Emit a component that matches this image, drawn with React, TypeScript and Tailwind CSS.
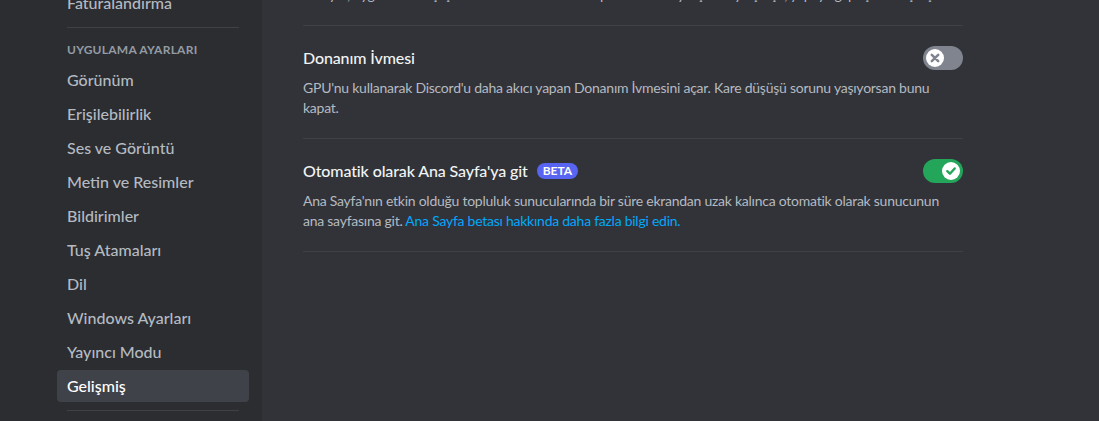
import React from "react";

const font = { fontFamily: 'Lato, "Noto Sans", sans-serif' };

function Toggle({ on }: { on: boolean }) {
  return (
    <div
      className={`relative w-[40px] h-[24px] rounded-full shrink-0 ${on ? "bg-[#23a55a]" : "bg-[#80848e]"}`}
    >
      <div
        className={`absolute top-[3px] w-[18px] h-[18px] rounded-full bg-white flex items-center justify-center ${on ? "left-[19px]" : "left-[3px]"}`}
      >
        {on ? (
          <svg width="12" height="12" viewBox="0 0 12 12">
            <path d="M2.3 6.2 L4.9 8.7 L9.7 3.5" stroke="#23a55a" strokeWidth="2.4" fill="none" strokeLinecap="round" strokeLinejoin="round" />
          </svg>
        ) : (
          <svg width="10" height="10" viewBox="0 0 10 10">
            <path d="M1.8 1.8 L8.2 8.2 M8.2 1.8 L1.8 8.2" stroke="#80848e" strokeWidth="2.5" strokeLinecap="round" />
          </svg>
        )}
      </div>
    </div>
  );
}

const items = [
  "Görünüm",
  "Erişilebilirlik",
  "Ses ve Görüntü",
  "Metin ve Resimler",
  "Bildirimler",
  "Tuş Atamaları",
  "Dil",
  "Windows Ayarları",
  "Yayıncı Modu",
];

function NavItem({ label, selected }: { label: string; selected?: boolean }) {
  return (
    <div
      className={`h-[32px] mb-[2px] px-[10px] rounded-[4px] flex items-center text-[16px] font-medium ${selected ? "bg-[#404249] text-white" : "text-[#b5bac1]"}`}
    >
      {label}
    </div>
  );
}

export default function App() {
  return (
    <div className="w-[1099px] h-[421px] flex overflow-hidden bg-[#313338]" style={font}>
      <div className="w-[262px] h-full bg-[#2b2d31] shrink-0 overflow-hidden">
        <div className="ml-[57px] w-[192px] -mt-[13px]">
          <NavItem label="Faturalandırma" />
          <div className="mx-[10px] my-[8px] h-px bg-[#3f4147]" />
          <div className="px-[10px] py-[6px] text-[12px] leading-[16px] font-bold text-[#949ba4] uppercase tracking-[0.02em]">
            Uygulama Ayarları
          </div>
          {items.map((i) => (
            <NavItem key={i} label={i} />
          ))}
          <NavItem label="Gelişmiş" selected />
          <div className="mx-[10px] mt-[8px] h-px bg-[#3f4147]" />
        </div>
      </div>
      <div className="pl-[41px] w-[701px] shrink-0">
        <div className="-mt-[15px] text-[14px] leading-[20px] tracking-[-0.25px] text-[#b5bac1] whitespace-nowrap overflow-hidden">
          Bu ayar, uygulamanın çeşitli özelliklerini kullanarak performansı iyileştirmeye çalışır, yapay ağ ipuçları ile çalışır.
        </div>
        <div className="mt-[20px] h-px bg-[#3f4147]" />
        <div className="pt-[20px] pb-[20px] border-b border-[#3f4147]">
          <div className="flex items-center justify-between h-[24px]">
            <div className="text-[16px] leading-[20px] font-medium tracking-[-0.12px] text-[#f2f3f5]">Donanım İvmesi</div>
            <Toggle on={false} />
          </div>
          <div className="mt-[8px] text-[14px] leading-[20px] tracking-[-0.25px] text-[#b5bac1]">
            GPU'nu kullanarak Discord'u daha akıcı yapan Donanım İvmesini açar. Kare düşüşü sorunu yaşıyorsan bunu kapat.
          </div>
        </div>
        <div className="pt-[20px] pb-[20px] border-b border-[#3f4147]">
          <div className="flex items-center justify-between h-[24px]">
            <div className="flex items-center">
              <span className="text-[16px] leading-[20px] font-medium tracking-[-0.12px] text-[#f2f3f5]">Otomatik olarak Ana Sayfa'ya git</span>
              <span className="ml-[9px] h-[16px] px-[6px] rounded-full bg-[#5865f2] text-white text-[12px] leading-[16px] font-bold flex items-center">
                BETA
              </span>
            </div>
            <Toggle on={true} />
          </div>
          <div className="mt-[8px] text-[14px] leading-[20px] tracking-[-0.25px] text-[#b5bac1]">
            Ana Sayfa'nın etkin olduğu topluluk sunucularında bir süre ekrandan uzak kalınca otomatik olarak sunucunun ana sayfasına git.{" "}
            <span className="text-[#00a8fc]">Ana Sayfa betası hakkında daha fazla bilgi edin.</span>
          </div>
        </div>
      </div>
    </div>
  );
}
